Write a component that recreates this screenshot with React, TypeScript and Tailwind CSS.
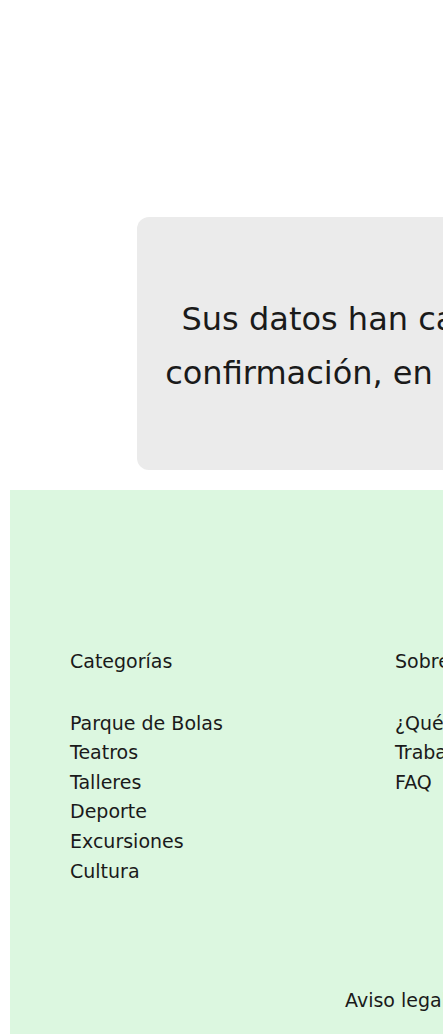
const categorias = [
  "Parque de Bolas",
  "Teatros",
  "Talleres",
  "Deporte",
  "Excursiones",
  "Cultura",
];

const sobre = ["¿Qué es Peques?", "Trabaja con nosotros", "FAQ"];

const contacto = ["Contacto", "Blog", "Prensa"];

const legales = ["Aviso legal", "Política de privacidad", "Cookies"];

export default function App() {
  return (
    <div className="w-full h-screen overflow-hidden bg-white text-[#1a1a1a] font-['DejaVu_Sans',sans-serif]">
      <div className="w-[1000px]">
        <main className="pt-[217px] pl-[137px]">
          <div className="w-[728px] h-[253px] rounded-xl bg-[#ebebeb] flex items-center justify-center pt-1">
            <p className="text-[32px] leading-[54px] text-center whitespace-nowrap">
              Sus datos han cambiado correctamente
              <br />
              confirmación, en breve recibirá un correo.
            </p>
          </div>
        </main>

        <footer className="mt-5 mx-[10px] bg-[#dcf7e0] pt-[157px] pb-10 text-[19px] leading-[29.6px]">
          <div className="grid grid-cols-[325px_325px_1fr] pl-[60px]">
            <div>
              <h3 className="mb-8">Categorías</h3>
              <ul>
                {categorias.map((c) => (
                  <li key={c}>{c}</li>
                ))}
              </ul>
            </div>
            <div>
              <h3 className="mb-8">Sobre nosotros</h3>
              <ul>
                {sobre.map((c) => (
                  <li key={c}>{c}</li>
                ))}
              </ul>
            </div>
            <div>
              <h3 className="mb-8">Ayuda</h3>
              <ul>
                {contacto.map((c) => (
                  <li key={c}>{c}</li>
                ))}
              </ul>
            </div>
          </div>

          <div className="mt-[100px] flex gap-12 pl-[335px]">
            {legales.map((l) => (
              <span key={l}>{l}</span>
            ))}
          </div>
        </footer>
      </div>
    </div>
  );
}
